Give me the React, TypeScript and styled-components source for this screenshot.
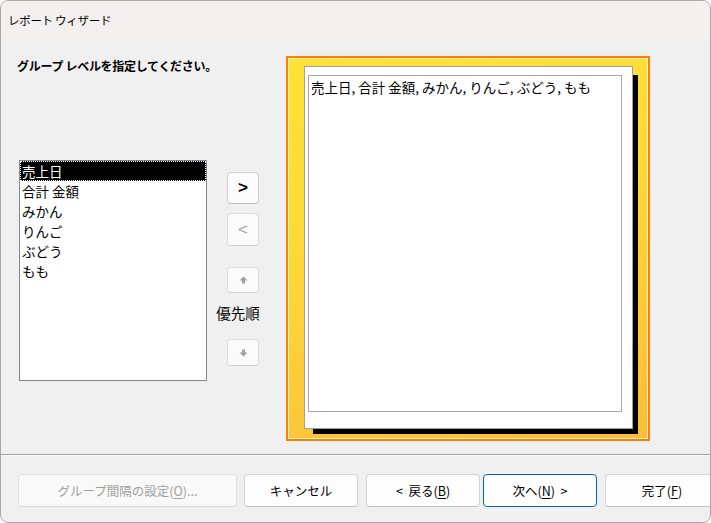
import React from 'react'
import styled, { createGlobalStyle } from 'styled-components'

const GlobalStyle = createGlobalStyle`
  html, body {
    margin: 0;
    padding: 0;
    background: #ffffff;
  }
  body {
    font-family: "Noto Sans CJK JP", "Noto Sans", sans-serif;
    color: #000;
  }
`

const Window = styled.div`
  width: 711px;
  height: 523px;
  box-sizing: border-box;
  border: 1px solid #a9a9a9;
  border-radius: 8px;
  overflow: hidden;
  display: flex;
  flex-direction: column;
  background: #f0f0f0;
`

const TitleBar = styled.div`
  height: 37px;
  flex-shrink: 0;
  display: flex;
  align-items: center;
  padding-left: 7px;
  background: #f3f0ef;
  font-size: 11.5px;
  letter-spacing: -0.3px;
`

const Body = styled.div`
  height: 416px;
  display: flex;
  padding: 18px 0 0 18px;
  box-sizing: border-box;
`

const LeftPane = styled.div`
  width: 267px;
  display: flex;
  flex-direction: column;
`

const Heading = styled.div`
  margin-left: -2px;
  font-size: 12px;
  font-weight: bold;
  line-height: 20px;
  white-space: nowrap;
  letter-spacing: -0.3px;
`

const PickRow = styled.div`
  display: flex;
  align-items: flex-start;
  margin-top: 84px;
`

const ListBox = styled.div`
  width: 188px;
  height: 221px;
  box-sizing: border-box;
  border: 1px solid #82878f;
  background: #fff;
`

const ListItem = styled.div<{ $selected?: boolean }>`
  height: 20px;
  line-height: 20px;
  padding-left: 2px;
  font-size: 13.5px;
  white-space: nowrap;
  background: ${p => (p.$selected ? '#000' : 'transparent')};
  color: ${p => (p.$selected ? '#fff' : '#000')};
  outline: ${p => (p.$selected ? '1px dotted #fff' : 'none')};
  outline-offset: -1px;
`

const SideColumn = styled.div`
  width: 32px;
  margin-left: 20px;
  padding-top: 12px;
  display: flex;
  flex-direction: column;
  align-items: center;
`

const SideButton = styled.div<{ $h: number; $top: number; $disabled?: boolean }>`
  width: 32px;
  height: ${p => p.$h}px;
  margin-top: ${p => p.$top}px;
  box-sizing: border-box;
  border: 1px solid ${p => (p.$disabled ? '#dcdcdc' : '#d0d0d0')};
  border-bottom-color: ${p => (p.$disabled ? '#d2d2d2' : '#bdbdbd')};
  border-radius: 4px;
  background: #fbfbfb;
  display: flex;
  align-items: center;
  justify-content: center;
  font-family: "Liberation Sans", Arial, sans-serif;
  font-size: 17px;
  font-weight: ${p => (p.$disabled ? 'normal' : 'bold')};
  color: ${p => (p.$disabled ? '#a6a6a6' : '#000')};
`

const PriorityLabel = styled.div`
  margin-top: 10px;
  margin-right: 10px;
  height: 20px;
  line-height: 20px;
  font-size: 14.5px;
  white-space: nowrap;
`

const Frame = styled.div`
  width: 364px;
  height: 385px;
  box-sizing: border-box;
  border: 2px solid #ff8000;
  box-shadow: inset 0 0 0 1px #fff3c4;
  background: linear-gradient(165deg, #ffe236 0%, #fedc38 35%, #fdcb3a 70%, #fbbd3c 100%);
  padding: 8px 15px 10px 16px;
  display: flex;
`

const Card = styled.div`
  flex: 1;
  display: flex;
  box-sizing: border-box;
  border: 1px solid #a0a0a0;
  background: #fff;
  box-shadow: 7px 7px 0 -2px #000;
  padding: 8px 10px 16px 3px;
`

const Preview = styled.div`
  flex: 1;
  border: 1px solid #a8a8a8;
  padding: 1px 2px;
  font-size: 13.5px;
  line-height: 20px;
  white-space: nowrap;
`

const Separator = styled.div`
  height: 1px;
  background: #a0a0a0;
  border-bottom: 1px solid #fafafa;
  flex-shrink: 0;
`

const Footer = styled.div`
  flex: 1;
  display: flex;
  align-items: flex-start;
  padding: 18px 0 0 17px;
`

const Button = styled.div<{ $w: number; $gap: number; $disabled?: boolean; $primary?: boolean }>`
  width: ${p => p.$w}px;
  flex-shrink: 0;
  height: 33px;
  margin-right: ${p => p.$gap}px;
  box-sizing: border-box;
  border: 1px solid ${p => (p.$primary ? '#0067c0' : p.$disabled ? '#e0e0e0' : '#d3d3d3')};
  border-bottom-color: ${p => (p.$primary ? '#0067c0' : p.$disabled ? '#d8d8d8' : '#c2c2c2')};
  border-radius: 4px;
  background: ${p => (p.$disabled ? '#f9f9f9' : '#fdfdfd')};
  display: flex;
  align-items: center;
  justify-content: center;
  font-size: 12.5px;
  white-space: pre;
  color: ${p => (p.$disabled ? '#a0a0a0' : '#000')};
`

const Key = styled.span`
  text-decoration: underline;
  text-underline-offset: 2px;
`

const Arrow = ({ down }: { down?: boolean }) => (
  <svg width="9" height="8" viewBox="0 0 9 8" style={{ transform: down ? 'rotate(180deg)' : undefined }}>
    <path d="M4.5 0.5 L8.5 4.5 L6 4.5 L6 7.5 L3 7.5 L3 4.5 L0.5 4.5 Z" fill="#a0a0a0" />
  </svg>
)

const fields = ['売上日', '合計 金額', 'みかん', 'りんご', 'ぶどう', 'もも']

export default function App() {
  return (
    <>
      <GlobalStyle />
      <Window>
        <TitleBar>レポート ウィザード</TitleBar>
        <Body>
          <LeftPane>
            <Heading>グループ レベルを指定してください。</Heading>
            <PickRow>
              <ListBox>
                {fields.map((f, i) => (
                  <ListItem key={f} $selected={i === 0}>{f}</ListItem>
                ))}
              </ListBox>
              <SideColumn>
                <SideButton $h={32} $top={0}>&gt;</SideButton>
                <SideButton $h={33} $top={9} $disabled>&lt;</SideButton>
                <SideButton $h={26} $top={21} $disabled><Arrow /></SideButton>
                <PriorityLabel>優先順</PriorityLabel>
                <SideButton $h={27} $top={16} $disabled><Arrow down /></SideButton>
              </SideColumn>
            </PickRow>
          </LeftPane>
          <Frame>
            <Card>
              <Preview>{fields.join(', ')}</Preview>
            </Card>
          </Frame>
        </Body>
        <Separator />
        <Footer>
          <Button $w={219} $gap={7} $disabled>グループ間隔の設定(<Key>O</Key>)...</Button>
          <Button $w={114} $gap={8}>キャンセル</Button>
          <Button $w={114} $gap={3}>{'<  戻る('}<Key>B</Key>)</Button>
          <Button $w={114} $gap={8} $primary>次へ(<Key>N</Key>{')  >'}</Button>
          <Button $w={114} $gap={0}>完了(<Key>F</Key>)</Button>
        </Footer>
      </Window>
    </>
  )
}
